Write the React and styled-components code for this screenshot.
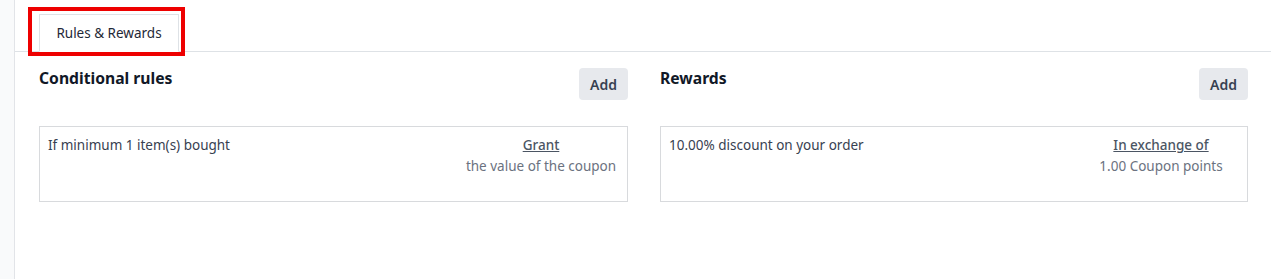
import React from "react"
import styled, { createGlobalStyle } from "styled-components"

const GlobalStyle = createGlobalStyle`
  html, body {
    margin: 0;
    padding: 0;
    background: #fff;
    font-family: "Noto Sans", "Open Sans", sans-serif;
    font-size: 13.5px;
    color: #374151;
  }
`

const rules = [
  {
    id: "rules",
    title: "Conditional rules",
    text: "If minimum 1 item(s) bought",
    link: "Grant",
    note: "the value of the coupon",
  },
  {
    id: "rewards",
    title: "Rewards",
    text: "10.00% discount on your order",
    link: "In exchange of",
    note: "1.00 Coupon points",
  },
]

const App = () => {
  return (
    <>
      <GlobalStyle />
      <Page>
        <Gutter />
        <Main>
          <TabBar>
            <Tab>
              Rules &amp; Rewards
              <Highlight />
            </Tab>
          </TabBar>
          <Columns>
            {rules.map((r) => (
              <Column key={r.id}>
                <ColumnHead>
                  <Heading>{r.title}</Heading>
                  <AddButton>Add</AddButton>
                </ColumnHead>
                <Card>
                  <CardText>{r.text}</CardText>
                  <CardSide>
                    <SideLink>{r.link}</SideLink>
                    <SideNote>{r.note}</SideNote>
                  </CardSide>
                </Card>
              </Column>
            ))}
          </Columns>
        </Main>
      </Page>
    </>
  )
}

export default App

const Page = styled.div`
  display: flex;
  height: 279px;
  overflow: hidden;
`
const Gutter = styled.div`
  width: 14px;
  flex: none;
  background: #f9fafb;
  border-right: 1px solid #e2e4e8;
`
const Main = styled.div`
  flex: 1;
  display: flex;
  flex-direction: column;
`
const TabBar = styled.div`
  display: flex;
  padding: 14px 0 0 24px;
  border-bottom: 1px solid #dee2e6;
`
const Tab = styled.div`
  position: relative;
  box-sizing: border-box;
  width: 140px;
  height: 38px;
  margin-bottom: -1px;
  display: flex;
  align-items: center;
  justify-content: center;
  background: #fff;
  border: 1px solid #dee2e6;
  border-bottom-color: #fff;
  color: #1f2937;
  font-size: 13.5px;
`
const Highlight = styled.span`
  position: absolute;
  top: -8px;
  left: -12px;
  right: -7px;
  bottom: -5px;
  border: 4px solid #ee0000;
  pointer-events: none;
`
const Columns = styled.div`
  display: grid;
  grid-template-columns: 589px 588px;
  column-gap: 32px;
  padding: 16px 0 0 24px;
`
const Column = styled.div`
  display: flex;
  flex-direction: column;
`
const ColumnHead = styled.div`
  display: flex;
  justify-content: space-between;
  align-items: flex-start;
  height: 58px;
`
const Heading = styled.h3`
  margin: 0;
  font-size: 15.7px;
  font-weight: 700;
  color: #111827;
  line-height: 20px;
`
const AddButton = styled.button`
  width: 49px;
  height: 32px;
  border: none;
  border-radius: 4px;
  background: #e7e9ed;
  color: #374151;
  font-family: inherit;
  font-size: 14px;
  font-weight: 600;
  cursor: pointer;
`
const Card = styled.div`
  display: flex;
  justify-content: space-between;
  height: 76px;
  box-sizing: border-box;
  border: 1px solid #d8dadd;
  padding: 9px 0 0 8px;
`
const CardText = styled.div`
  line-height: 18px;
  color: #374151;
`
const CardSide = styled.div`
  width: 172px;
  display: flex;
  flex-direction: column;
  align-items: center;
  line-height: 18px;
  gap: 3px;
`
const SideLink = styled.span`
  text-decoration: underline;
  color: #4b5563;
  font-weight: 500;
`
const SideNote = styled.span`
  color: #6b7280;
`
